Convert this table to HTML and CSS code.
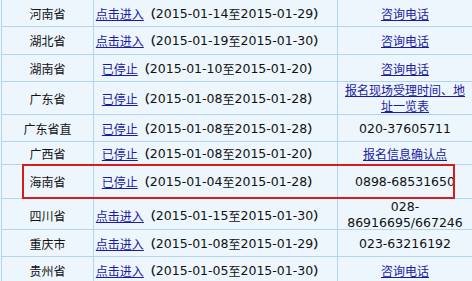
FILE: index.html
```html
<!DOCTYPE html>
<html lang="zh">
<head>
<meta charset="utf-8">
<link rel="stylesheet" href="styles.css">
</head>
<body>
<div class="wrap">
  <div class="tbl">
    <div class="row h26">
      <div class="c c1">河南省</div>
      <div class="c c2"><a href="#">点击进入</a><span class="p">（</span><span class="n">2015-01-14</span>至<span class="n">2015-01-29</span><span class="p">）</span></div>
      <div class="c c3"><a href="#">咨询电话</a></div>
    </div>
    <div class="row h27">
      <div class="c c1">湖北省</div>
      <div class="c c2"><a href="#">点击进入</a><span class="p">（</span><span class="n">2015-01-19</span>至<span class="n">2015-01-30</span><span class="p">）</span></div>
      <div class="c c3"><a href="#">咨询电话</a></div>
    </div>
    <div class="row h26">
      <div class="c c1">湖南省</div>
      <div class="c c2"><a href="#">已停止</a><span class="p">（</span><span class="n">2015-01-10</span>至<span class="n">2015-01-20</span><span class="p">）</span></div>
      <div class="c c3"><a href="#">咨询电话</a></div>
    </div>
    <div class="row h32">
      <div class="c c1">广东省</div>
      <div class="c c2"><a href="#">已停止</a><span class="p">（</span><span class="n">2015-01-08</span>至<span class="n">2015-01-28</span><span class="p">）</span></div>
      <div class="c c3 two"><a href="#">报名现场受理时间、地<br>址一览表</a></div>
    </div>
    <div class="row h26">
      <div class="c c1">广东省直</div>
      <div class="c c2"><a href="#">已停止</a><span class="p">（</span><span class="n">2015-01-08</span>至<span class="n">2015-01-28</span><span class="p">）</span></div>
      <div class="c c3"><span class="n">020-37605711</span></div>
    </div>
    <div class="row h22">
      <div class="c c1">广西省</div>
      <div class="c c2"><a href="#">已停止</a><span class="p">（</span><span class="n">2015-01-08</span>至<span class="n">2015-01-20</span><span class="p">）</span></div>
      <div class="c c3"><a href="#">报名信息确认点</a></div>
    </div>
    <div class="row h33">
      <div class="c c1">海南省</div>
      <div class="c c2"><a href="#">已停止</a><span class="p">（</span><span class="n">2015-01-04</span>至<span class="n">2015-01-28</span><span class="p">）</span></div>
      <div class="c c3"><span class="n">0898-68531650</span></div>
    </div>
    <div class="row h30">
      <div class="c c1">四川省</div>
      <div class="c c2"><a href="#">点击进入</a><span class="p">（</span><span class="n">2015-01-15</span>至<span class="n">2015-01-30</span><span class="p">）</span></div>
      <div class="c c3 two"><span class="n">028-<br>86916695/667246</span></div>
    </div>
    <div class="row h26">
      <div class="c c1">重庆市</div>
      <div class="c c2"><a href="#">点击进入</a><span class="p">（</span><span class="n">2015-01-08</span>至<span class="n">2015-01-29</span><span class="p">）</span></div>
      <div class="c c3"><span class="n">023-63216192</span></div>
    </div>
    <div class="row h26">
      <div class="c c1">贵州省</div>
      <div class="c c2"><a href="#">点击进入</a><span class="p">（</span><span class="n">2015-01-05</span>至<span class="n">2015-01-30</span><span class="p">）</span></div>
      <div class="c c3"><a href="#">咨询电话</a></div>
    </div>
  </div>
  <div class="mark"></div>
</div>
</body>
</html>
```

FILE: styles.css
```css
html, body {
  margin: 0;
  padding: 0;
  background: #eef6fd;
}
body {
  width: 472px;
  height: 281px;
  overflow: hidden;
  font-family: "Noto Sans CJK SC", "DejaVu Sans", sans-serif;
  font-size: 12px;
  color: #111;
}
.wrap {
  position: relative;
  width: 472px;
  height: 281px;
}
.tbl {
  margin-left: 1px;
  width: 470px;
  border-left: 1px solid #b3d5f0;
  border-right: 1px solid #b3d5f0;
}
.row {
  display: grid;
  grid-template-columns: 91px 244px 1fr;
  border-bottom: 1px solid #b3d5f0;
}
.h22 { height: 22px; }
.h26 { height: 26px; }
.h27 { height: 27px; }
.h30 { height: 30px; }
.h32 { height: 32px; }
.h33 { height: 33px; }
.c {
  display: flex;
  align-items: center;
  justify-content: center;
  text-align: center;
  line-height: 15px;
  white-space: nowrap;
}
.two {
  line-height: 16px;
}
.c2, .c3 {
  border-left: 1px solid #b3d5f0;
}
.c2 {
  padding-right: 10px;
}
a {
  color: #1a1aa6;
  text-decoration: underline;
}
.p {
  font-family: "Noto Sans CJK JP", sans-serif;
  font-weight: bold;
}
.n {
  font-family: "DejaVu Sans", sans-serif;
  font-size: 12.5px;
}
.mark {
  position: absolute;
  left: 22px;
  top: 164px;
  width: 429px;
  height: 31px;
  border: 2px solid #d41c1c;
}
```
